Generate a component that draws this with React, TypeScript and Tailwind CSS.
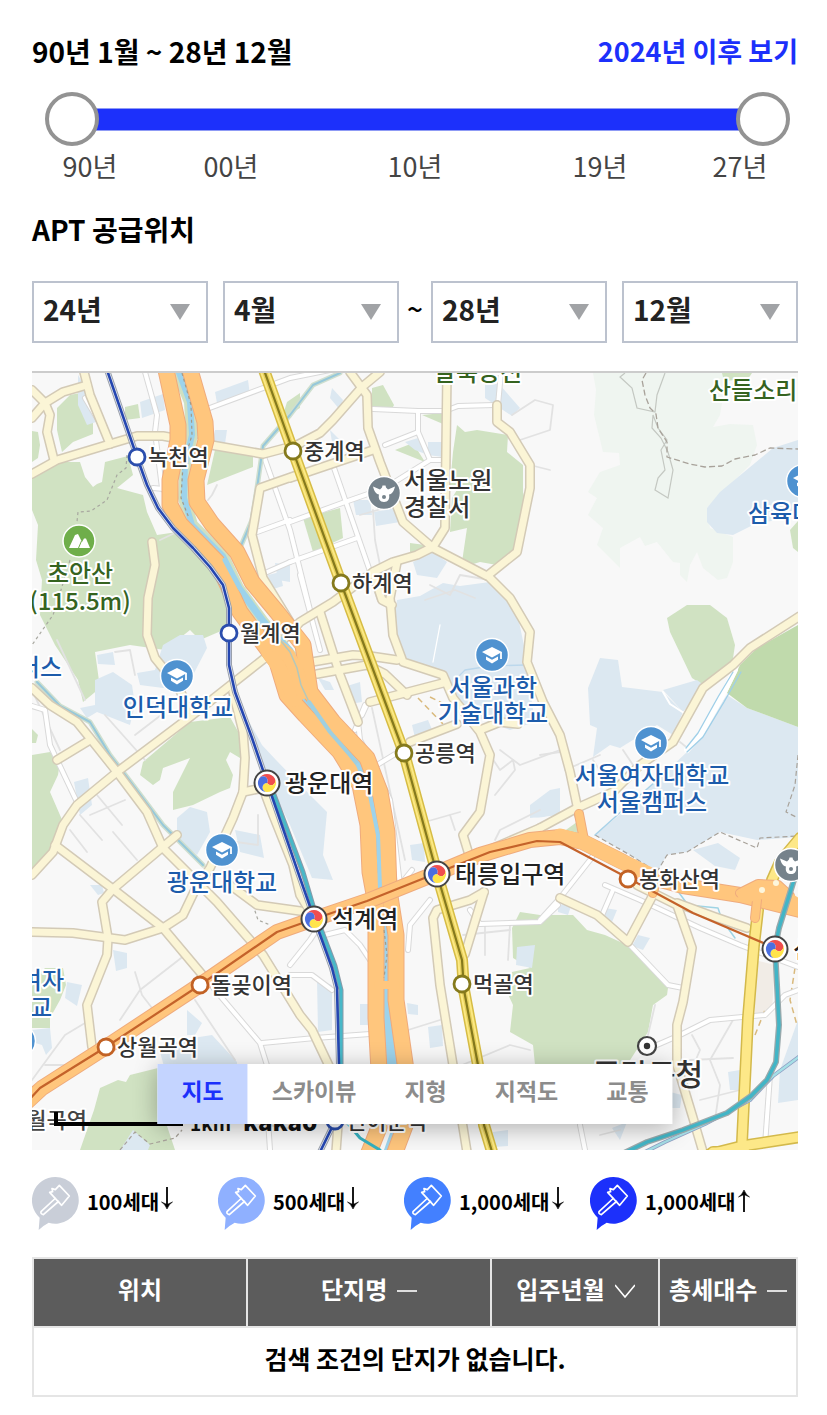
import { useState } from "react";

/* ---------- Map geometry ---------- */

const GREEN = [
  "32,478 58,462 80,462 85,477 93,487 97,484 102,482 105,462 128,456 133,475 117,488 143,495 147,512 157,535 177,532 207,562 227,598 228,628 200,640 190,630 165,650 130,645 95,652 100,688 83,702 78,680 55,645 40,615 42,580 36,560 38,525 32,510",
  "57,408 70,395 80,393 85,405 93,422 93,434 73,442 62,452 57,430",
  "32,431 38,432 40,445 38,458 32,462",
  "143,762 190,722 230,717 240,735 240,758 230,752 226,760 233,775 230,788 220,792 193,805 173,810 173,792 190,758 163,768 160,780 153,785 140,775",
  "32,755 50,752 60,762 58,775 50,792 63,822 50,855 32,868",
  "32,729 38,735 36,743 32,743",
  "457,425 465,432 477,430 508,435 507,452 523,465 523,492 527,508 520,540 515,555 497,565 480,562 470,565 462,562 467,528 450,532 452,498 460,485 450,485 453,452",
  "372,388 383,385 394,405 393,407 372,407",
  "422,415 443,413 443,424",
  "410,543 425,545 430,552 410,556",
  "395,450 413,443 425,462 415,458",
  "215,450 253,453 253,467 207,485",
  "303,518 340,508 343,538 313,552",
  "125,407 138,404 140,418 125,420",
  "300,393 287,402 282,418 300,408",
  "722,373 752,373 748,379 724,381",
  "667,618 687,605 710,605 727,618 735,645 732,665 703,685 692,678 670,632",
  "520,912 540,915 573,915 587,930 605,935 627,945 668,988 667,995 653,1005 648,1032 627,1065 620,1080 540,1075 535,1065 533,1045 510,1032 513,1005 507,992 512,972 530,968 513,958 512,928",
  "158,1068 130,1075 126,1082 118,1080 100,1088 94,1110 80,1150 175,1150 165,1120 250,1110",
  "32,982 45,968 63,968 66,985 60,1000 50,1018 50,1028 32,1028",
  "563,832 577,822 578,834",
  "798,521 790,530 793,548 798,552",
];

const BLUE = [
  "397,600 420,596 443,583 460,586 490,582 517,612 527,660 530,690 535,722 510,730 470,715 447,680 405,660 393,630",
  "413,562 433,552 447,562 437,578 417,575",
  "600,658 618,660 622,687 663,692 683,712 673,735 657,725 620,748 610,745 593,757 597,728 590,725 588,688",
  "727,695 747,708 798,727 798,837 757,840 720,832 687,852 667,855 657,872 630,855 595,835 623,812 687,752",
  "663,690 697,680 705,686 683,712",
  "693,850 718,843 740,858 735,870 715,866",
  "798,440 773,448 720,492 707,508 707,522 717,533 733,535 753,525 798,515",
  "247,718 262,745 276,760 310,795 327,812 323,855 333,880 312,878 290,825 270,785",
  "163,645 180,635 203,635 207,648 193,675 163,688 140,685 137,673 155,670",
  "95,680 113,672 132,685 135,705 130,725 97,712 87,718 80,708 95,705",
  "97,655 113,652 115,665 98,664",
  "177,818 190,807 207,812 210,832 197,855 177,838",
  "235,830 260,835 264,858 240,852",
  "160,1052 180,1040 212,1035 237,1062 237,1070 165,1070",
  "187,1010 202,1023 195,1035 187,1035",
  "67,982 82,985 77,1006 65,998",
  "113,950 127,953 127,968 116,971",
  "90,885 102,885 104,893 98,895",
  "32,1030 50,1028 52,1048 46,1055 42,1045 32,1042",
  "120,1150 133,1130 150,1145 148,1150",
  "78,375 90,395 96,422 87,425 78,405",
  "140,402 163,394 165,410 142,418",
  "215,392 248,380 250,395 217,403",
  "215,430 227,430 225,444 212,443",
  "332,388 343,400 340,410 330,398",
  "330,430 340,440 343,465 335,460",
  "353,500 370,500 372,515 356,515",
  "405,442 418,438 428,455 415,450",
  "428,442 443,442 443,457 428,455",
  "374,512 395,508 400,522 376,526",
  "275,563 290,565 290,582 278,580",
  "268,575 280,572 283,586 270,590",
  "485,380 500,385 520,408 512,416 485,398",
  "347,686 360,682 362,702 350,704",
  "412,725 428,720 433,732 415,738",
  "410,845 424,843 425,862 412,860",
  "530,805 550,790 560,788 560,815 530,818",
  "318,678 330,682 334,690 325,690",
  "317,980 332,985 332,1030 318,1032",
  "360,1004 368,1004 368,1025 360,1025",
  "407,1003 418,1005 418,1015 408,1014",
  "428,1027 442,1025 443,1046 430,1048",
  "517,947 535,945 532,968 516,965",
  "638,935 650,938 643,950 632,946",
  "605,908 617,910 612,922 602,918",
  "558,905 572,903 568,915 558,912",
  "728,1072 740,1070 740,1090 730,1090",
  "780,1070 798,1020 798,1100 778,1103",
  "670,1092 682,1095 680,1108 671,1108",
  "493,1132 508,1130 508,1146 494,1147",
  "612,1128 627,1122 620,1140",
  "74,782 88,778 92,805 80,815",
];

const PALE = "593,373 727,373 720,415 713,427 730,424 753,425 757,445 750,465 730,485 707,508 710,528 733,537 733,562 727,578 718,580 703,568 697,552 690,565 687,582 680,575 680,563 673,562 657,542 645,546 640,537 620,548 620,568 597,545 603,528 588,515 597,498 588,492 600,472 620,465 619,453 603,452 594,415 596,390";

const CREAM = [
  "32,474 57,460 110,444 137,436 163,436 217,446 263,454 297,445 320,433 333,420 362,387 380,372",
  "32,418 45,403 63,392 87,385",
  "84,372 90,395 110,444",
  "32,390 45,403 50,415 47,432 54,460",
  "152,542 155,565 148,598 147,635 155,658 177,685 190,710",
  "32,875 53,852 63,825 77,805 117,772 190,717 270,654 300,622 333,602 373,572 393,562 417,555 433,547 445,528 447,372",
  "32,688 50,705 77,722 90,738 117,772 147,812 163,848 217,902 263,955 300,1015 312,1030 330,1068",
  "57,760 90,740",
  "55,845 113,889 163,928 205,978",
  "177,835 113,889 102,902 108,938 107,955 87,1005 92,1047",
  "32,932 73,933 125,940 163,928 183,915 195,890 210,868 233,818 243,792 245,758 243,732 233,692",
  "243,792 263,788 273,815 293,865 300,895 312,915",
  "230,885 257,905 300,911",
  "350,372 367,395 368,428 380,462 403,522 433,548 487,576 517,552 530,488 530,465 510,432 497,422 497,405",
  "490,578 510,598 530,632 527,662 543,702 560,735 570,772 579,815",
  "397,562 390,598 393,635 403,662 443,675 453,698 480,732 490,755 480,812 463,835 470,858",
  "290,478 373,450",
  "297,475 260,488 252,535 263,578 290,622",
  "312,662 353,655 370,656 397,660",
  "317,674 367,665 385,674 407,695",
  "370,702 443,683",
  "320,612 340,675 358,722",
  "373,572 382,600 392,605",
  "410,742 457,724",
  "484,892 480,905 465,954",
  "484,892 470,900 437,910 433,918 440,985 453,1065 467,1152",
  "540,828 577,808 613,792 640,765 673,742 703,688 733,665 750,648 800,616",
  "437,872 470,858 540,828",
  "560,898 597,915 628,942 653,895",
  "637,885 677,905 692,948 683,1002 677,1025 677,1065 693,1118 703,1152",
  "677,903 715,917 747,928",
  "336,1152 338,1125",
  "480,730 500,722 518,724",
];

const WHITE = [
  "145,372 157,415 155,432 162,488 172,500",
  "207,409 290,378 340,368",
  "263,454 290,530 310,610",
  "333,465 380,600",
  "290,522 345,502 385,488 430,460 442,460",
  "290,562 357,538",
  "300,575 320,650",
  "373,409 418,411 445,411 458,406 495,405",
  "498,405 501,372",
  "418,411 418,432 430,460",
  "385,445 418,432",
  "257,532 290,520",
  "265,573 290,562",
  "32,706 45,710 50,745 76,800",
  "85,398 110,440",
  "153,488 175,490",
  "377,765 410,745",
  "358,722 360,740 375,768 390,800 400,885",
  "365,705 355,730",
  "368,702 362,715",
  "205,978 260,1043 270,1075",
  "262,1043 315,1038 370,1034",
  "290,965 310,940 320,925",
  "290,975 312,975 332,990",
  "318,925 330,960",
  "325,935 345,930 360,945 370,960",
  "408,950 410,925 430,900",
  "400,885 412,870",
  "540,920 560,898 590,860 600,845",
  "470,910 480,924 540,922 558,905",
  "613,890 600,920",
  "605,885 640,900 700,928 740,945 798,967",
  "630,945 668,985 683,988",
  "650,1048 680,1035 710,1020 765,1015 785,995 798,990",
  "770,1075 765,1145",
  "580,1125 585,1150",
  "268,1120 270,1150",
];

const LANES = [
  "32,690 60,750", "57,640 85,700", "115,652 130,650 135,675", "105,715 145,760", "135,735 165,712",
  "90,815 125,800", "97,795 122,825", "80,815 102,840", "70,830 87,852", "113,832 137,860",
  "32,1080 65,1035 90,1020", "120,1020 140,990 185,955", "135,972 142,995 152,1008", "45,1065 90,1065",
  "195,1000 215,1030 235,1060", "222,840 258,845 258,815", "373,510 375,540 380,565", "360,515 385,508",
  "430,585 450,595 460,575 490,580", "512,415 535,400 553,405 550,430 520,440", "530,465 550,470",
  "490,755 500,770 513,760 515,770 495,795", "500,750 520,765 560,750", "425,822 460,812", "450,815 455,830",
  "372,708 405,860", "495,840 500,830 540,810", "540,755 560,752", "593,760 603,775", "623,750 633,765",
  "565,770 600,755", "690,750 680,742", "463,935 510,930", "485,925 485,955", "510,925 508,960",
  "408,1030 440,1020", "455,1068 510,1045 530,1050", "692,1035 700,1050 685,1085", "690,1060 733,1058",
  "733,1020 710,1060 720,1085 715,1120", "700,1100 740,1090", "655,1005 648,1035",
  "217,485 212,495 208,500", "235,1120 300,1130", "620,1130 600,1135", "177,532 160,540",
  "425,600 455,590 475,598",
];

const WATERWAYS = [
  "37,682 60,706 90,722 110,755 133,785 163,825 203,865",
  "340,373 313,385 290,415 263,446 257,488 252,520 240,548",
];

const HIGHWAYS = [
  "166,370 178,425 178,440 170,480 170,505 180,524 217,562 240,612 277,662 287,695 305,715 340,752 360,785 368,825 370,872 376,905 376,1018 379,1070 384,1115 368,1155",
  "190,370 205,422 206,440 196,480 197,502 212,524 237,552 252,582 277,612 303,645 310,692 333,722 367,758 380,792 387,832 389,890 396,935 396,1000 406,1070 409,1115 394,1155",
];

const LINE6_ROAD = "28,1101 42,1088 106,1047 200,985 277,932 314,919 370,900 437,873 480,855 530,840 560,837 583,842 623,862 653,878 683,886 740,895 800,910";
const LINE6 = "28,1101 40,1088 106,1047 200,985 277,932 314,919 367,901 437,873 490,852 537,841 560,842 628,878 693,913 775,948";
const LINE7 = "264,370 293,451 341,583 404,753 437,874 462,960 464,990 478,1065 484,1125 493,1155";
const LINE1 = "107,370 137,457 147,485 158,508 173,528 193,548 210,567 223,585 229,608 229,665 235,692 252,738 267,782 300,878 314,918 332,968 337,988 339,1065 338,1115 320,1152";
const LINE1_TEAL = "270,784 303,872 316,916 335,966 341,990 341,1068";
const TEAL = "794,880 779,928 775,948 777,985 779,1025 776,1062 767,1080 751,1096 727,1113 683,1130 647,1142 622,1154";

const STATIONS = [
  { x: 137, y: 457, color: "#2b4ead", label: "녹천역" },
  { x: 229, y: 633, color: "#2b4ead", label: "월계역" },
  { x: 335, y: 1121, color: "#2b4ead", label: "신이문역" },
  { x: 293, y: 451, color: "#857a1c", label: "중계역" },
  { x: 341, y: 583, color: "#857a1c", label: "하계역" },
  { x: 404, y: 753, color: "#857a1c", label: "공릉역" },
  { x: 462, y: 984, color: "#857a1c", label: "먹골역" },
  { x: 106, y: 1047, color: "#c26225", label: "상월곡역" },
  { x: 200, y: 985, color: "#c26225", label: "돌곶이역" },
  { x: 628, y: 879, color: "#c26225", label: "봉화산역" },
];

const TRANSFERS = [
  { x: 267, y: 783, label: "광운대역" },
  { x: 314, y: 919, label: "석계역" },
  { x: 437, y: 874, label: "태릉입구역" },
  { x: 775, y: 949, label: "신내역" },
];

const SCHOOLS = [
  [177, 676], [492, 655], [651, 743], [222, 850], [803, 481], [19, 1041],
];

type Anchor = "start" | "middle" | "end";
const PLACES: { x: number; y: number; text: string; color: string; anchor?: Anchor; size?: number }[] = [
  { x: 80, y: 582, text: "초안산", color: "#35631f" },
  { x: 80, y: 610, text: "(115.5m)", color: "#35631f" },
  { x: 478, y: 381, text: "달북능선", color: "#35631f" },
  { x: 709, y: 399, text: "산들소리", color: "#35631f", anchor: "start" },
  { x: 748, y: 522, text: "삼육대학교", color: "#1d5cab", anchor: "start" },
  { x: 178, y: 716, text: "인덕대학교", color: "#1d5cab" },
  { x: 222, y: 891, text: "광운대학교", color: "#1d5cab" },
  { x: 493, y: 696, text: "서울과학", color: "#1d5cab" },
  { x: 493, y: 722, text: "기술대학교", color: "#1d5cab" },
  { x: 652, y: 784, text: "서울여자대학교", color: "#1d5cab" },
  { x: 652, y: 811, text: "서울캠퍼스", color: "#1d5cab" },
  { x: 62, y: 676, text: "캠퍼스", color: "#1d5cab", anchor: "end" },
  { x: 64, y: 989, text: "여자", color: "#1d5cab", anchor: "end" },
  { x: 52, y: 1016, text: "대학교", color: "#1d5cab", anchor: "end" },
  { x: 404, y: 489, text: "서울노원", color: "#333333", anchor: "start" },
  { x: 404, y: 516, text: "경찰서", color: "#333333", anchor: "start" },
  { x: 87, y: 1128, text: "월곡역", color: "#444444", anchor: "end", size: 22 },
  { x: 648, y: 1085, text: "중랑구청", color: "#333333", size: 30 },
];

/* ---------- Map pieces ---------- */

function Line({ points, color, width, dash }: { points: string; color: string; width: number; dash?: string }) {
  return (
    <polyline
      points={points}
      fill="none"
      stroke={color}
      strokeWidth={width}
      strokeDasharray={dash}
      strokeLinejoin="round"
      strokeLinecap={dash ? "butt" : "round"}
    />
  );
}

function Roads({ lines, casing, fill, outer, inner }: { lines: string[]; casing: string; fill: string; outer: number; inner: number }) {
  return (
    <g>
      {lines.map((p) => <Line key={p} points={p} color={casing} width={outer} />)}
      {lines.map((p) => <Line key={p} points={p} color={fill} width={inner} />)}
    </g>
  );
}

function Label({ x, y, text, color, anchor = "middle", size = 24 }: { x: number; y: number; text: string; color: string; anchor?: Anchor; size?: number }) {
  return (
    <text
      x={x}
      y={y}
      textAnchor={anchor}
      fontSize={size}
      fill={color}
      stroke="#ffffff"
      strokeWidth={4}
      strokeLinejoin="round"
      paintOrder="stroke"
    >
      {text}
    </text>
  );
}

function School({ x, y }: { x: number; y: number }) {
  return (
    <g transform={`translate(${x} ${y})`}>
      <circle r="16.5" fill="#4f92d0" stroke="#ffffff" strokeWidth="1.5" />
      <path d="M0 -8 L10 -3 L0 2.5 L-10 -3 Z" fill="#ffffff" />
      <path d="M-6 1.5 L0 4.8 L6 1.5 V4.8 L0 8.5 L-6 4.8 Z" fill="#ffffff" />
      <path d="M9 -3 V4" stroke="#ffffff" strokeWidth="1.8" />
    </g>
  );
}

function Police({ x, y }: { x: number; y: number }) {
  return (
    <g transform={`translate(${x} ${y})`}>
      <circle r="16.5" fill="#75828b" stroke="#ffffff" strokeWidth="1.5" />
      <path d="M-11 -6.5 L-4 -3.5 L-2 -5.5 L-1.5 -7.5 H1.5 L2 -5.5 L4 -3.5 L11 -6.5 C10 -2 8 1 5 1.5 C6 6 4 9 0 9 C-4 9 -6 6 -5 1.5 C-8 1 -10 -2 -11 -6.5 Z" fill="#ffffff" />
      <circle cy="4" r="2" fill="#75828b" />
    </g>
  );
}

const SWIRL = "M0 0 A4.5 4.5 0 0 0 -7.8 -4.5 A9 9 0 0 1 7.8 -4.5 A4.5 4.5 0 0 1 0 0 Z";

function Transfer({ x, y, label }: { x: number; y: number; label: string }) {
  return (
    <g>
      <g transform={`translate(${x} ${y})`}>
        <circle r="12.5" fill="#ffffff" stroke="#444444" strokeWidth="2" />
        <path d={SWIRL} fill="#f04e4e" />
        <path d={SWIRL} fill="#ffe44a" transform="rotate(120)" />
        <path d={SWIRL} fill="#4b6fe0" transform="rotate(240)" />
      </g>
      <Label x={x + 18} y={y + 9} text={label} color="#222222" anchor="start" />
    </g>
  );
}

function MapCanvas() {
  return (
    <svg viewBox="32 373 766 777" className="block h-auto w-full font-medium" role="img" aria-label="지도">
      <rect x="32" y="373" width="766" height="777" fill="#f8f8f8" />
      <polygon points={PALE} fill="#eff5f0" />
      {GREEN.map((p) => <polygon key={p} points={p} fill="#d0e2c2" />)}
      {BLUE.map((p) => <polygon key={p} points={p} fill="#dce8f1" />)}
      <polygon points="798,625 757,648 740,665 727,693 747,708 798,727" fill="#c0daac" />
      <polygon points="755,960 775,965 772,1010 755,1018" fill="#f1ece6" />
      <ellipse cx="545" cy="807" rx="16" ry="9" fill="#dce8f1" transform="rotate(-25 545 807)" />

      {LANES.map((p) => <Line key={p} points={p} color="#e2e2e2" width={1.8} />)}
      <g fill="none" stroke="#c4c8c2" strokeWidth="1.2">
        <path d="M625 373 L620 377 L632 388 L637 408 L655 412 L657 395 L665 373" />
        <path d="M653 415 L652 428 L661 438 L668 452 L673 470 L668 498 L655 490 L658 478 L665 470 L661 450 L667 440 L658 428 Z" />
      </g>
      <Line points="646,373 642,380 645,395 650,408 656,414 658,428 667,442 667,457 690,464 705,467 722,466 735,459 755,455 770,448 798,449" color="#a8a29a" width={1.3} dash="6 3" />
      <Line points="127,455 126,468 117,475 107,500 91,511 78,512 77,522" color="#a8a8a0" width={1.2} dash="3 3" />
      <Line points="70,560 58,600 53,615 32,645" color="#a8a8a0" width={1.2} dash="3 3" />
      <Line points="595,835 630,855 657,872 667,855 687,852 720,832 757,848 760,838 798,836" color="#a8a29a" width={1.2} dash="5 3" />
      <Line points="798,755 795,785 786,812 798,818" color="#a8a29a" width={1.2} dash="5 3" />
      <Line points="120,1150 135,1132 150,1144 175,1138 182,1130" color="#a8a29a" width={1.2} dash="4 3" />
      <Line points="253,905 258,920 270,925" color="#a8a8a0" width={1.2} dash="3 3" />
      <Line points="418,698 443,724" color="#d9b97c" width={1.5} dash="6 4" />
      <Line points="430,697 446,705" color="#d9b97c" width={1.5} dash="6 4" />
      <Line points="755,1035 765,1010" color="#d9b97c" width={1.5} dash="6 4" />
      <Line points="795,968 790,1000 797,1025" color="#d9b97c" width={1.5} dash="6 4" />
      <Line points="455,680 465,670 490,666 525,665" color="#bcd8ec" width={1.3} />
      <Line points="440,625 433,662" color="#ffffff" width={1.3} />
      <Line points="663,692 670,704 684,713" color="#ffffff" width={2} />

      <Roads lines={WHITE} casing="#d9d9d9" fill="#ffffff" outer={6} inner={4} />
      {WATERWAYS.map((p) => <Line key={p} points={p} color="#cfdfcf" width={5} />)}
      {WATERWAYS.map((p) => <Line key={p} points={p} color="#96c8da" width={2} />)}
      <Line points="735,670 720,700 700,735 687,750" color="#ffffff" width={6} />
      <Line points="733,672 718,697 698,733 686,748" color="#9fcfe8" width={1.3} />
      <Line points="741,672 724,702 703,737 687,752" color="#9fcfe8" width={1.3} />
      <Line points="655,782 623,810 595,835" color="#a9d2e8" width={1.5} />
      <Line points="677,890 688,905 718,908 722,920 735,938" color="#9fd4e4" width={1.5} />

      <Roads lines={CREAM} casing="#d3cab6" fill="#fbf5d6" outer={10} inner={7} />

      <Line points="178,373 190,402 192,435 185,465 184,498 192,525 223,556 238,588 263,622 290,655 297,662 307,702 330,732 357,762 372,802 379,838 381,892 386,935 386,982" color="#cfe0c2" width={12} />
      <Line points="178,370 190,402 192,435 185,465 184,498 192,525 223,556 238,588 263,622 290,650 297,665 307,702 330,732 357,762 372,802 379,838 381,892 386,935 386,982 388,1018 392,1065 395,1132 388,1155" color="#9dd3ec" width={6} />
      <Line points="386,900 386,975" color="#9dd3ec" width={9} />
      <Line points="387,995 388,1020 392,1065 397,1130 388,1155" color="#9dd3ec" width={11} />

      <Roads lines={["745,1152 713,1152", "758,910 754,945 748,1018 742,1142", "710,1154 742,1146 800,1137", "800,838 780,862 772,880"]} casing="#d3b94b" fill="#fde888" outer={12} inner={9} />
      <Roads lines={HIGHWAYS} casing="#efab7d" fill="#ffc67d" outer={17} inner={15} />
      <Line points="268,652 282,672 295,700" color="#ffc67d" width={14} />
      <Line points="270,640 288,655 297,672 303,692" color="#ffc67d" width={14} />
      <Line points="378,985 396,985" color="#ffc67d" width={8} />
      <Line points="225,560 240,588 262,618 276,635" color="#9dd3ec" width={5} />
      <Line points="276,635 290,652 297,668 301,685 309,702" color="#b3c8bc" width={1.5} />
      <Line points="309,702 330,732 350,755 358,765" color="#9fcfe0" width={4} />
      <Line points="358,765 370,795 378,835 380,888" color="#9dd3ec" width={4} />
      <Line points="182,373 191,405 192,435 183,465 181,498 189,518" color="#a39b88" width={1.2} dash="3 3" />
      <Line points="384,930 387,955 384,978" color="#a39b88" width={1.2} dash="3 3" />

      <Roads lines={[LINE6_ROAD]} casing="#efab7d" fill="#ffc67d" outer={16} inner={14} />
      <Roads lines={["579,814 584,840", "755,918 757,900", "740,893 758,884 778,885 790,896", "653,893 656,880"]} casing="#efab7d" fill="#ffc67d" outer={10} inner={8} />
      <Line points="560,836 583,842 623,862 655,877" color="#ffc67d" width={15} />
      <Line points="745,896 760,892 780,894 795,904" color="#ffc67d" width={14} />
      <circle cx="762" cy="890" r="3" fill="#fdf6dc" />
      <circle cx="776" cy="883" r="3" fill="#fdf6dc" />
      <Line points={LINE6} color="#c4622a" width={2.2} />

      <Roads lines={[LINE7]} casing="#d6bc45" fill="#fce983" outer={12} inner={9} />
      <Line points={LINE7} color="#e6cf5c" width={5} />
      <Line points={LINE7} color="#85791c" width={2.2} />

      <Line points={LINE1} color="#9aa0ac" width={6} />
      <Line points={LINE1} color="#e8ebf0" width={4} />
      <Line points={LINE1_TEAL} color="#8a9aa8" width={5} />
      <Line points={LINE1_TEAL} color="#48b8c8" width={3} />
      <Line points={LINE1} color="#2446b0" width={2.6} />
      <Line points="345,1120 360,1138 380,1150" color="#36b0bf" width={3} />

      <Line points="800,1056 773,1076 750,1100 705,1124 665,1142 645,1152" color="#8f9fc4" width={4} />
      <Line points="800,1056 773,1076 750,1100 705,1124 665,1142 645,1152" color="#a5dfe6" width={2.4} />
      <Line points={TEAL} color="#9aa9ac" width={6} />
      <Line points={TEAL} color="#42b5c6" width={3.4} />

      {PLACES.map((p) => <Label key={p.text + p.y} {...p} />)}
      {STATIONS.map((s) => (
        <g key={s.label}>
          <circle cx={s.x} cy={s.y} r="8" fill="#ffffff" stroke={s.color} strokeWidth="2.8" />
          <Label x={s.x + 11} y={s.y + 8} text={s.label} color="#333333" anchor="start" size={22} />
        </g>
      ))}
      {TRANSFERS.map((t) => <Transfer key={t.label} {...t} />)}
      {SCHOOLS.map(([x, y]) => <School key={x} x={x} y={y} />)}
      <Police x={384} y={493} />
      <Police x={791} y={865} />

      <g transform="translate(79 541)">
        <circle r="16" fill="#6fae4a" stroke="#ffffff" strokeWidth="1.5" />
        <path d="M-10 7 L-4 -6 L-1 -7 L3 1 L5 -2.5 L7 -2.5 L11 7 Z" fill="#ffffff" />
        <path d="M2.5 0 L-0.5 7" fill="none" stroke="#6fae4a" strokeWidth="1" />
      </g>
      <g transform="translate(647 1046)">
        <circle r="9" fill="#ffffff" stroke="#444444" strokeWidth="2.2" />
        <circle r="3.2" fill="#333333" />
      </g>

      <path d="M56 1112 V1124 H183" fill="none" stroke="#000000" strokeWidth="4" />
      <text x="190" y="1131" fontSize="19" fill="#111111" className="font-bold">1km</text>
      <text x="243" y="1131" fontSize="24" fill="#111111" className="font-black">kakao</text>
    </svg>
  );
}

/* ---------- Page controls ---------- */

const THUMB =
  "pointer-events-none col-start-1 row-start-1 h-[54px] w-full appearance-none bg-transparent [&::-webkit-slider-thumb]:pointer-events-auto [&::-webkit-slider-thumb]:size-[54px] [&::-webkit-slider-thumb]:appearance-none [&::-webkit-slider-thumb]:rounded-full [&::-webkit-slider-thumb]:border-4 [&::-webkit-slider-thumb]:border-solid [&::-webkit-slider-thumb]:border-[#939393] [&::-webkit-slider-thumb]:bg-white";

function PeriodSlider() {
  const [from, setFrom] = useState(0);
  const [to, setTo] = useState(467);
  const max = 467;
  return (
    <div className="mt-5 mr-2 ml-[13px] grid items-center">
      <div className="col-start-1 row-start-1 mx-[27px] h-[23px] bg-[#e5e5e5]">
        <div
          className="h-full border-y border-[#8f9bf5] bg-[#1c30fb]"
          style={{ marginLeft: `${(from / max) * 100}%`, width: `${((to - from) / max) * 100}%` }}
        />
      </div>
      <input type="range" aria-label="시작 년월" min={0} max={max} value={from} onChange={(e) => setFrom(Math.min(+e.target.value, to))} className={THUMB} />
      <input type="range" aria-label="종료 년월" min={0} max={max} value={to} onChange={(e) => setTo(Math.max(+e.target.value, from))} className={THUMB} />
    </div>
  );
}

function PeriodSelect({ label, value, options }: { label: string; value: string; options: string[] }) {
  return (
    <div className="grid flex-1 items-center">
      <select
        aria-label={label}
        defaultValue={value}
        className="col-start-1 row-start-1 h-[62px] w-full appearance-none border-2 border-[#bcc2ce] bg-white pb-1.5 pl-[9px] text-[28px] font-bold text-[#222222]"
      >
        {options.map((o) => <option key={o}>{o}</option>)}
      </select>
      <svg viewBox="0 0 20 16" className="pointer-events-none col-start-1 row-start-1 mr-[18px] h-4 w-5 justify-self-end" aria-hidden="true">
        <path d="M0 0 H20 L10 16 Z" fill="#a1a3a6" />
      </svg>
    </div>
  );
}

function GavelPin({ color }: { color: string }) {
  return (
    <svg viewBox="0 0 141 159" className="h-[53px] w-[47px] shrink-0" aria-hidden="true">
      <path d="M70 0 A70 70 0 1 1 50 137 Q36 144 20 159 L23 122 A70 70 0 0 1 70 0 Z" fill={color} />
      <g fill="none" stroke="#ffffff" strokeWidth="5" strokeLinejoin="round">
        <path d="M71 63 L27 104 Q25 111 34 113 L81 72" />
        <path d="M82 25 L112 57 L89 85 L53 46 L62 44 L60 35 L70 38 Z" />
      </g>
    </svg>
  );
}

function Arrow({ up }: { up?: boolean }) {
  return (
    <svg viewBox="0 0 12 24" className={up ? "mb-0.5 ml-0.5 h-6 w-3 rotate-180" : "mb-2 ml-0.5 h-6 w-3"} aria-hidden="true">
      <path d="M6 1 V20" stroke="#000000" strokeWidth="1.8" />
      <path d="M0.5 16 Q4 18 6 23 Q8 18 11.5 16 L6 18.5 Z" fill="#000000" stroke="#000000" strokeWidth="0.6" />
    </svg>
  );
}

const LEGEND = [
  { color: "#c9ced8", text: "100세대" },
  { color: "#8fb0ff", text: "500세대" },
  { color: "#4380ff", text: "1,000세대" },
  { color: "#1c30fb", text: "1,000세대", up: true },
];

const TABS = ["지도", "스카이뷰", "지형", "지적도", "교통"];
const YEARS = ["24년", "25년", "26년", "27년", "28년"];
const MONTHS = ["1월", "2월", "3월", "4월", "5월", "6월", "7월", "8월", "9월", "10월", "11월", "12월"];

function SortDash() {
  return (
    <svg viewBox="0 0 20 20" className="size-5" aria-hidden="true">
      <path d="M0 12 H20" stroke="#ffffff" strokeWidth="1.6" />
    </svg>
  );
}

function SortDown() {
  return (
    <svg viewBox="0 0 20 20" className="size-5" aria-hidden="true">
      <path d="M0 6 L10 18 L20 6" fill="none" stroke="#ffffff" strokeWidth="1.6" />
    </svg>
  );
}

export default function App() {
  const [tab, setTab] = useState("지도");
  return (
    <main className="bg-white pt-8 pr-[29px] pb-4 pl-8 font-['Noto_Sans_CJK_KR',sans-serif] text-black">
      <header className="flex items-center justify-between pb-0.5 leading-[38px]">
        <h2 className="text-[28px] font-bold">90년 1월 ~ 28년 12월</h2>
        <button type="button" className="text-[27px] font-bold text-[#1c30fb]">2024년 이후 보기</button>
      </header>

      <PeriodSlider />
      <div className="mr-[15px] ml-[13px] grid grid-cols-[90fr_192fr_176fr_194fr_86fr] text-center text-[27px] leading-10 font-normal text-[#444444]">
        <span>90년</span>
        <span>00년</span>
        <span>10년</span>
        <span>19년</span>
        <span>27년</span>
      </div>

      <h2 className="mt-[23px] text-[28px] leading-10 font-bold">APT 공급위치</h2>

      <div className="mt-8 flex items-center">
        <div className="flex flex-1 gap-[15px]">
          <PeriodSelect label="시작 년" value="24년" options={YEARS} />
          <PeriodSelect label="시작 월" value="4월" options={MONTHS} />
        </div>
        <span className="w-8 pb-2 text-center text-[28px] leading-9 font-medium">~</span>
        <div className="flex flex-1 gap-[15px]">
          <PeriodSelect label="종료 년" value="28년" options={YEARS} />
          <PeriodSelect label="종료 월" value="12월" options={MONTHS} />
        </div>
      </div>

      <section className="relative mt-7 overflow-hidden border-t-2 border-[#cccccc]">
        <MapCanvas />
        <div className="absolute bottom-[26px] left-1/2 flex -translate-x-1/2 bg-white shadow-[0_4px_24px_rgba(0,0,0,0.3)]">
          {TABS.map((t) => (
            <button
              key={t}
              type="button"
              onClick={() => setTab(t)}
              className={
                t === tab
                  ? "h-[60px] bg-[#c4d4ff] px-6 pb-2 text-[23px] font-bold whitespace-nowrap text-[#1c30fb]"
                  : "h-[60px] px-6 pb-2 text-[23px] font-bold whitespace-nowrap text-[#8c8c8c]"
              }
            >
              {t}
            </button>
          ))}
        </div>
      </section>

      <ul className="mt-[27px] grid grid-cols-4 pr-[22px]">
        {LEGEND.map((l) => (
          <li key={l.color} className="flex items-center gap-2 text-xl font-bold whitespace-nowrap">
            <GavelPin color={l.color} />
            <span className="flex items-center pb-1">
              {l.text}
              <Arrow up={l.up} />
            </span>
          </li>
        ))}
      </ul>

      <table className="mt-[27px] w-full table-fixed border-collapse text-center">
        <thead>
          <tr className="h-[69px] bg-[#5c5c5c] text-2xl text-white">
            <th scope="col" className="w-[28%] border-2 border-[#e5e5e5] pb-2 font-bold">위치</th>
            <th scope="col" className="w-[32%] border-2 border-[#e5e5e5] pb-2 font-bold">
              <button type="button" className="inline-flex items-center gap-2.5">단지명<SortDash /></button>
            </th>
            <th scope="col" className="w-[22%] border-2 border-[#e5e5e5] pb-2 font-bold">
              <button type="button" className="inline-flex items-center gap-2.5">입주년월<SortDown /></button>
            </th>
            <th scope="col" className="w-[18%] border-2 border-[#e5e5e5] pb-2 font-bold">
              <button type="button" className="inline-flex items-center gap-2.5 whitespace-nowrap">총세대수<SortDash /></button>
            </th>
          </tr>
        </thead>
        <tbody>
          <tr className="h-[69px]">
            <td colSpan={4} className="border-2 border-[#e5e5e5] pb-1.5 text-[25px] font-bold">검색 조건의 단지가 없습니다.</td>
          </tr>
        </tbody>
      </table>
    </main>
  );
}
